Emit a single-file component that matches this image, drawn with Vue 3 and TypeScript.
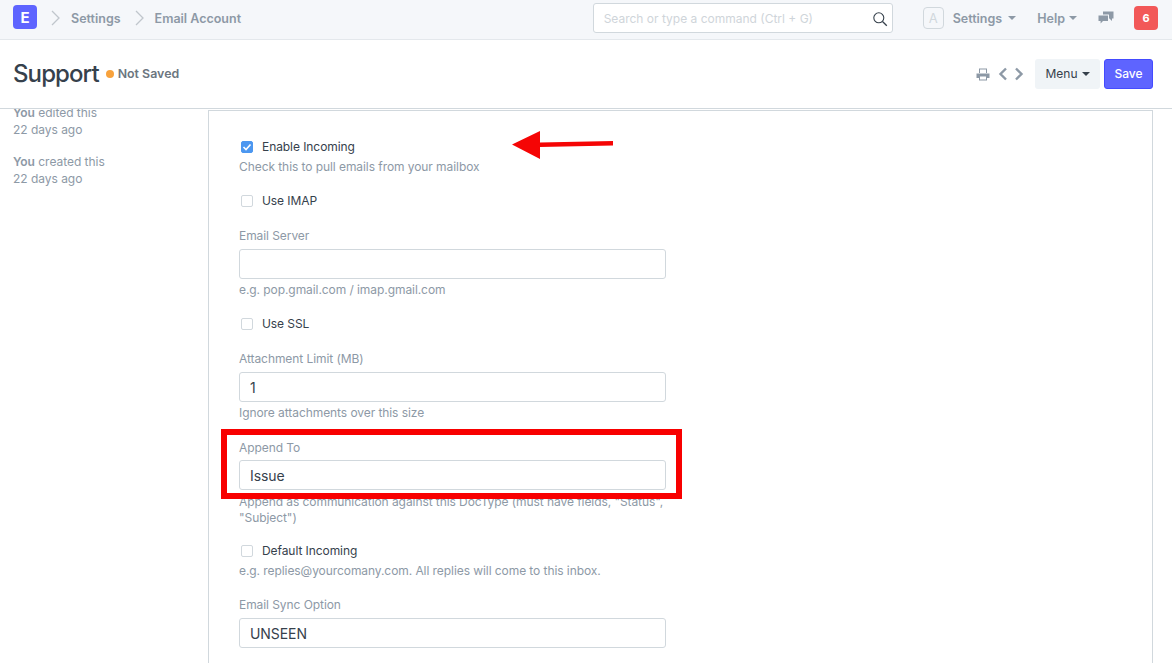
<script setup lang="ts">
interface Crumb { label: string }
const crumbs: Crumb[] = [{ label: 'Settings' }, { label: 'Email Account' }]
</script>

<template>
  <div class="page">
    <header class="navbar">
      <div class="logo">E</div>
      <template v-for="c in crumbs" :key="c.label">
        <svg class="chev" width="12" height="16" viewBox="0 0 12 16"><path d="M2 1l7 7-7 7" fill="none" stroke="#c0c6cc" stroke-width="1.3" /></svg>
        <span class="crumb">{{ c.label }}</span>
      </template>
      <div class="search">
        <span>Search or type a command (Ctrl + G)</span>
        <svg width="16" height="16" viewBox="0 0 16 16"><circle cx="6.8" cy="6.8" r="5" fill="none" stroke="#36414c" stroke-width="1.1" /><path d="M10.5 10.5l4.3 4.3" stroke="#36414c" stroke-width="1.3" /></svg>
      </div>
      <div class="avatar">A</div>
      <span class="nav-item settings">Settings<i class="caret"></i></span>
      <span class="nav-item help">Help<i class="caret"></i></span>
      <svg class="chat" width="16" height="16" viewBox="0 0 16 16"><path d="M5 1.500h10.500v7H14v2.500l-2.500-2.500H11V4.500H5z" fill="#8d99a6" /><path d="M0.5 5.5H10V11H5l-2.400 2.500V11H0.500z" fill="#8d99a6" /></svg>
      <div class="badge">6</div>
    </header>

    <div class="titlebar">
      <h1>Support</h1>
      <i class="dot"></i>
      <span class="status">Not Saved</span>
      <svg class="print" width="14" height="13" viewBox="0 0 14 13"><path d="M3 0.5h8V5H3zM0.5 5.5h13V10H11v2.500H3V10H0.500z" fill="#8d99a6" /><path d="M4 8.500h6V11.500H4zM4 1.500h6V5H4z" fill="#fff" /></svg>
      <svg class="pager" width="10" height="14" viewBox="0 0 10 14"><path d="M8 1.500L2.500 7 8 12.500" fill="none" stroke="#8d99a6" stroke-width="2.400" /></svg>
      <svg class="pager second" width="10" height="14" viewBox="0 0 10 14"><path d="M2 1.500L7.500 7 2 12.500" fill="none" stroke="#8d99a6" stroke-width="2.400" /></svg>
      <button class="btn menu">Menu<i class="caret dark"></i></button>
      <button class="btn save">Save</button>
    </div>

    <div class="content">
      <aside class="side">
        <p><b>You</b> edited this<br />22 days ago</p>
        <p><b>You</b> created this<br />22 days ago</p>
      </aside>
      <main class="form">
        <div class="check">
          <span class="box on"><svg width="10" height="10" viewBox="0 0 10 10"><path d="M1.500 5l2.500 2.500 4.500-5" fill="none" stroke="#fff" stroke-width="1.600" /></svg></span>
          Enable Incoming
        </div>
        <p class="help-text">Check this to pull emails from your mailbox</p>

        <div class="check gap"><span class="box"></span>Use IMAP</div>

        <label class="label gap-lg">Email Server</label>
        <div class="input"></div>
        <p class="help-text near">e.g. pop.gmail.com / imap.gmail.com</p>

        <div class="check gap"><span class="box"></span>Use SSL</div>

        <label class="label gap-lg">Attachment Limit (MB)</label>
        <div class="input">1</div>
        <p class="help-text near">Ignore attachments over this size</p>

        <label class="label gap-lg tight">Append To</label>
        <div class="input">Issue</div>
        <p class="help-text wrap">Append as communication against this DocType (must have fields, "Status", "Subject")</p>

        <div class="check gap-sm"><span class="box"></span>Default Incoming</div>
        <p class="help-text">e.g. replies@yourcomany.com. All replies will come to this inbox.</p>

        <label class="label gap">Email Sync Option</label>
        <div class="input">UNSEEN</div>
      </main>
    </div>

    <div class="red-box"></div>
    <svg class="arrow" width="104" height="30" viewBox="0 0 104 30"><path d="M0 14.500L28 1v11.500l73-1.500v4.500l-73 1.500V29z" fill="#f50505" /></svg>
  </div>
</template>

<style>
html, body { margin: 0; background: #fff; }
</style>

<style scoped>
.page {
  position: relative;
  width: 1172px;
  height: 663px;
  overflow: hidden;
  font-family: Inter, "Liberation Sans", sans-serif;
  color: #36414c;
  display: flex;
  flex-direction: column;
}
.navbar {
  height: 40px;
  box-sizing: border-box;
  flex: none;
  display: flex;
  align-items: center;
  background: #f5f7fa;
  border-bottom: 1px solid #e4e8ec;
  padding: 0 14px 3px 13px;
}
.logo {
  width: 24px;
  height: 24px;
  margin-top: -2px;
  border-radius: 4px;
  background: #5e64ff;
  color: #fff;
  font-weight: 700;
  font-size: 15px;
  display: flex;
  align-items: center;
  justify-content: center;
}
.chev { margin-left: 13px; }
.crumb {
  font-size: 12.5px;
  font-weight: 600;
  color: #8d99a6;
  margin-left: 9px;
}
.search {
  margin-left: auto;
  box-sizing: border-box;
  width: 300px;
  height: 30px;
  background: #fff;
  border: 1px solid #d1d8dd;
  border-radius: 3px;
  padding: 0 10px;
  display: flex;
  align-items: center;
  justify-content: space-between;
  font-size: 12px;
  color: #cfd5da;
}
.search svg { margin-right: -6px; margin-top: 1px; }
.avatar {
  box-sizing: border-box;
  width: 21px;
  height: 22px;
  margin-left: 30px;
  border: 1px solid #d1d8dd;
  border-radius: 4px;
  color: #d1d8dd;
  font-size: 13px;
  display: flex;
  align-items: center;
  justify-content: center;
}
.nav-item {
  font-size: 12.5px;
  font-weight: 600;
  color: #8d99a6;
  display: flex;
  align-items: center;
}
.settings { margin-left: 9px; }
.settings .caret { margin-left: 6px; }
.help { margin-left: 21px; }
.caret {
  width: 0;
  height: 0;
  margin-left: 4px;
  border-left: 4px solid transparent;
  border-right: 4px solid transparent;
  border-top: 4px solid #8d99a6;
}
.caret.dark { border-top-color: #36414c; }
.chat { margin-left: 21px; }
.badge {
  width: 24px;
  height: 24px;
  margin-left: 20px;
  border-radius: 4px;
  background: #f25858;
  color: #fff;
  font-size: 11px;
  font-weight: 700;
  display: flex;
  align-items: center;
  justify-content: center;
}
.titlebar {
  height: 69px;
  box-sizing: border-box;
  flex: none;
  display: flex;
  align-items: center;
  padding: 0 19px 0 13px;
  border-bottom: 1px solid #d1d8dd;
}
h1 {
  margin: -2px 0 0;
  font-size: 24px;
  font-weight: 500;
  letter-spacing: -0.9px;
  color: #36414c;
}
.dot {
  width: 8px;
  height: 8px;
  margin: -1px 0 0 7px;
  border-radius: 50%;
  background: #f8a23c;
}
.status {
  margin: -2px 0 0 4px;
  font-size: 12.4px;
  font-weight: 600;
  color: #6c7680;
}
.print { margin-left: auto; }
.pager { margin-left: 8px; }
.pager.second { margin-left: 6px; }
.btn {
  box-sizing: border-box;
  height: 30px;
  border-radius: 3px;
  font-family: inherit;
  font-size: 12px;
  border: 1px solid transparent;
  padding: 0 0 2px;
  display: flex;
  align-items: center;
  justify-content: center;
}
.btn .caret { margin-top: 2px; }
.menu {
  width: 65px;
  margin-left: 11px;
  background: #f0f4f7;
  color: #36414c;
}
.save {
  width: 49px;
  margin-left: 4px;
  background: #5e64ff;
  border-color: #444bff;
  color: #fff;
  font-weight: 500;
}
.content {
  flex: 1;
  display: flex;
  min-height: 0;
  overflow: hidden;
  padding-top: 1px;
}
.side {
  width: 208px;
  flex: none;
  box-sizing: border-box;
  padding-left: 13px;
  margin-top: -6px;
  font-size: 12px;
  line-height: 17px;
  letter-spacing: -0.03px;
  color: #8d99a6;
}
.side p { margin: 0 0 15px; }
.side b { font-weight: 600; }
.form {
  width: 945px;
  flex: none;
  box-sizing: border-box;
  border: 1px solid #d1d8dd;
  padding: 27px 0 0 30px;
  font-size: 12px;
  line-height: 17px;
  letter-spacing: -0.07px;
  height: 700px;
}
.form > * { width: 427px; }
.check {
  display: flex;
  align-items: center;
  color: #36414c;
  padding-left: 2px;
  box-sizing: border-box;
}
.box {
  box-sizing: border-box;
  width: 12px;
  height: 12px;
  margin-right: 9px;
  border: 1px solid #d1d8dd;
  border-radius: 2px;
  background: #fff;
  display: flex;
  align-items: center;
  justify-content: center;
}
.box.on { background: #4c97f0; border-color: #4c97f0; }
.gap { margin-top: 17px; }
.gap-lg { margin-top: 18px; }
.gap-sm { margin-top: 16px; }
.label { display: block; color: #8d99a6; margin-bottom: 5px; }
.label.tight { margin-bottom: 4px; }
.input {
  box-sizing: border-box;
  height: 30px;
  border: 1px solid #d1d8dd;
  border-radius: 3px;
  background: #fff;
  padding: 0 10px;
  font-size: 14px;
  line-height: 29px;
  color: #36414c;
}
.help-text {
  margin: 3px 0 0;
  color: #8d99a6;
}
.help-text.near { margin-top: 2px; }
.help-text.wrap { line-height: 16px; margin-top: 4px; }
.red-box {
  position: absolute;
  left: 221px;
  top: 429px;
  width: 461px;
  height: 70px;
  box-sizing: border-box;
  border: 6px solid #f80000;
}
.arrow {
  position: absolute;
  left: 512px;
  top: 130px;
}
</style>
